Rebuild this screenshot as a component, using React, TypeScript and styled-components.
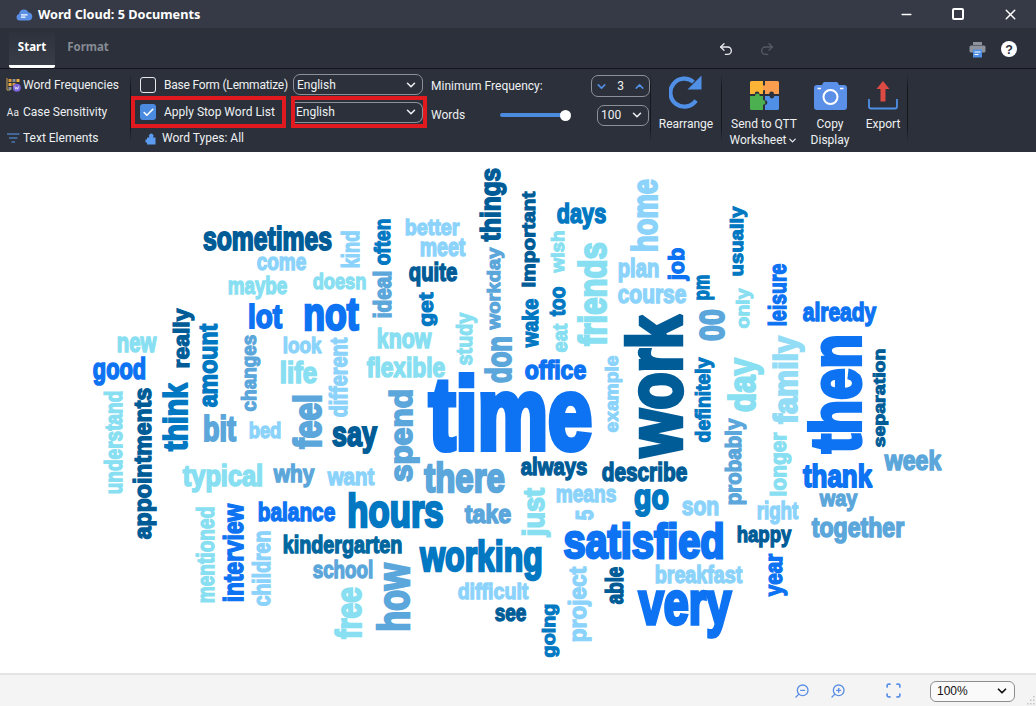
import React from "react";
import styled, { createGlobalStyle } from "styled-components";
import { ChevronDown, ChevronUp, Undo2, Redo2, ZoomIn, ZoomOut, Scan, Minus, X, Check } from "lucide-react";

const GlobalStyle = createGlobalStyle`
  html, body { margin: 0; padding: 0; height: 100%; overflow: hidden; }
  #root { height: 100%; }
  body { font-family: "Noto Sans", "Open Sans", sans-serif; }
`;

const Page = styled.div`
  width: 1036px; height: 706px; display: flex; flex-direction: column; background: #2b303a; color: #eef0f3;
`;
const TitleBar = styled.header`
  height: 28px; background: #353a46; display: flex; align-items: center; padding-left: 16px; flex: none;
`;
const AppTitle = styled.h1`
  margin: 0 0 0 5px; font-size: 12.7px; font-weight: 700; color: #fff; flex: 1;
`;
const WinButton = styled.div`
  width: 52px; height: 28px; display: flex; align-items: center; justify-content: center; color: #fff;
`;
const WinButtons = styled.div`display: flex;`;
const MaxBox = styled.div`width: 8px; height: 8px; border: 2px solid #fff; border-radius: 2px;`;

const TabRow = styled.nav`
  height: 40px; flex: none; display: flex; align-items: stretch; background: #2b303a; border-bottom: 1px solid #14161b; padding-left: 9px;
`;
const Tab = styled.div<{ $active?: boolean }>`
  width: ${p => (p.$active ? 46 : 66)}px; display: flex; align-items: center; justify-content: center;
  margin-top: 4px; padding-bottom: 4px; font-size: 11.5px; font-weight: 700;
  color: ${p => (p.$active ? "#fff" : "#868b94")};
  border-bottom: ${p => (p.$active ? "3px solid #fff" : "3px solid transparent")};
  border-radius: 0 0 2px 2px;
  background: ${p => (p.$active ? "linear-gradient(#2d323c, #383d48)" : "none")};
`;
const TabSpacer = styled.div`flex: 1;`;
const QuickIcons = styled.div`display: flex; align-items: center; height: 40px; margin-top: 1px;`;
const QuickSlot = styled.div<{ $w: number }>`
  width: ${p => p.$w}px; display: flex; justify-content: center; align-items: center; flex: none;
`;

const Ribbon = styled.section`
  height: 83px; flex: none; display: flex; background: #2b303a; font-family: Roboto, "Noto Sans", sans-serif; font-size: 12px; color: #eef0f3;
`;
const Sep = styled.div`
  width: 1px; flex: none; margin: 5px 0 10px;
  background: linear-gradient(transparent, #14171c 20%, #14171c 80%, transparent);
`;
const RowsGroup = styled.div`
  display: grid; grid-template-rows: 23px 32px 20px; padding-top: 4px; width: 130px; flex: none;
`;
const SideRow = styled.div`display: flex; align-items: center; white-space: nowrap;`;
const SideIcon = styled.span`width: 23px; flex: none; display: flex; justify-content: center; padding-left: 3px; box-sizing: border-box;`;
const AaIcon = styled.span`font-size: 10px; letter-spacing: .3px; color: #e6e8ec;`;

const StopGroup = styled.div`
  display: grid; grid-template-columns: 160px 136px; grid-template-rows: 23px 32px 20px; padding-top: 4px; flex: none;
`;
const CheckRow = styled.div`display: flex; align-items: center; gap: 8px; padding-left: 9px; white-space: nowrap;`;
const TightLabel = styled.span`letter-spacing: -0.2px;`;
const Highlight = styled.div<{ $mr?: number }>`
  border: 4px solid #e01a1f; display: flex; align-items: center; box-sizing: border-box;
  margin-right: ${p => p.$mr ?? 0}px;
`;
const HighlightCheck = styled(CheckRow)`padding-left: 5px; flex: 1;`;
const Box = styled.span<{ $on?: boolean }>`
  width: 16px; height: 16px; flex: none; border-radius: 3px; box-sizing: border-box; display: flex; align-items: center; justify-content: center;
  border: ${p => (p.$on ? "none" : "1.5px solid #e6e8ec")};
  background: ${p => (p.$on ? "#4a8be0" : "transparent")};
`;
const SelectBox = styled.div<{ $w?: number; $ml?: number }>`
  height: 21px; box-sizing: border-box; border: 1px solid #8b9099; border-radius: 7px;
  display: flex; align-items: center; justify-content: space-between; padding: 0 4px 0 3px;
  width: ${p => (p.$w ? `${p.$w}px` : "100%")}; margin-left: ${p => p.$ml ?? 0}px; align-self: center; flex: none;
`;
const FlushSelect = styled(SelectBox)`border-left: none; border-radius: 0 7px 7px 0; padding-left: 1px;`;
const TypesRow = styled.div`display: flex; align-items: center; gap: 5px; padding-left: 14px; grid-column: 1 / 3; white-space: nowrap;`;

const FreqGroup = styled.div`
  width: 223px; box-sizing: border-box; padding: 6px 0 0 4px; flex: none; display: flex; flex-direction: column; gap: 7px;
`;
const FreqRow = styled.div`height: 22px; display: flex; align-items: center; justify-content: space-between;`;
const Stepper = styled.div`
  width: 59px; height: 22px; box-sizing: border-box; border: 1px solid #8b9099; border-radius: 7px;
  display: flex; align-items: center; justify-content: space-between; padding: 0 3px;
`;
const Slider = styled.div`
  width: 66px; height: 4px; border-radius: 2px; background: #4a8be0; position: relative; margin-left: 35px; margin-right: 31px; flex: none;
`;
const Thumb = styled.div`
  position: absolute; right: -5px; top: -3.5px; width: 11px; height: 11px; border-radius: 50%; background: #fff;
`;
const WordsLabel = styled.span`width: 34px; flex: none;`;
const SliderRow = styled(FreqRow)`justify-content: flex-start;`;

const ToolGroup = styled.div<{ $w: number; $pl?: number }>`
  width: ${p => p.$w}px; box-sizing: border-box; padding-left: ${p => p.$pl ?? 0}px; flex: none; display: flex;
`;
const Tool = styled.div<{ $w: number }>`
  width: ${p => p.$w}px; display: flex; flex-direction: column; align-items: center; text-align: center; line-height: 16px; white-space: nowrap;
`;
const ToolIcon = styled.div`height: 47px; display: flex; align-items: flex-end; justify-content: center; padding-bottom: 6px; box-sizing: border-box;`;
const DropLine = styled.span`display: inline-flex; align-items: center; gap: 1px;`;

const Canvas = styled.main`flex: 1; background: #fff; min-height: 0;`;
const CloudSvg = styled.svg`display: block; width: 1036px; height: 521px;`;
const WordText = styled.text`
  font-family: "Liberation Sans", Arial, sans-serif; font-weight: 700; stroke-linejoin: miter; stroke-miterlimit: 2;
`;

const StatusBar = styled.footer`
  height: 33px; flex: none; box-sizing: border-box; background: #f4f4f4; border-top: 2px solid #e4e4e4;
  display: flex; align-items: center; position: relative; color: #5b8fe6;
`;
const StatusSlot = styled.div<{ $w: number }>`width: ${p => p.$w}px; display: flex; justify-content: center; flex: none;`;
const ZoomSelect = styled.div`
  width: 85px; height: 21px; box-sizing: border-box; border: 1px solid #8e8e8e; border-radius: 6px; background: #fafafa; color: #111;
  display: flex; align-items: center; justify-content: space-between; padding: 0 5px 0 6px; font-size: 12px; margin-top: 1px;
  font-family: "Liberation Sans", sans-serif;
`;
const Grip = styled.svg`position: absolute; right: 1px; bottom: 1px;`;

const D = "#005c97", M = "#0278c2", B = "#0d73f2", S = "#5ba6da", L = "#8bd3fb", C = "#88dff1";

type Placed = { t: string; x: number; y: number; len: number; xh: number; c: string; v: boolean };
const H = (t: string, x0: number, x1: number, base: number, xh: number, c: string): Placed =>
  ({ t, x: x0, y: base, len: x1 - x0, xh, c, v: false });
const V = (t: string, bottom: number, top: number, x0: number, x1: number, c: string): Placed => {
  const asc = /[bdfhkltij0-9]/.test(t), desc = /[gjpqy]/.test(t);
  const xh = (x1 - x0) / (1 + (asc ? 0.33 : 0) + (desc ? 0.28 : 0));
  return { t, x: x1 - (desc ? 0.28 * xh : 0), y: bottom, len: bottom - top, xh, c, v: true };
};

const WORDS: Placed[] = [
  H("sometimes", 202, 333, 251, 19, D), H("come", 256, 307, 271, 14, L), V("kind", 269, 230, 342, 360, L),
  V("often", 266, 218, 374, 391, M), V("ideal", 319, 270, 373, 392, S), H("better", 404, 460, 236, 13, L),
  H("meet", 419, 466, 257, 15, L), V("things", 242, 167, 479, 505, D), V("workday", 330, 247, 486, 504, S),
  H("quite", 408, 458, 282, 15, D), H("doesn", 312, 367, 290, 13, C), H("maybe", 227, 288, 295, 14, C),
  H("lot", 247, 283, 329, 20, B), H("not", 302, 360, 331, 27, B), V("get", 327, 292, 418, 437, M),
  H("know", 376, 432, 349, 16, C), V("study", 366, 312, 456, 476, C), H("flexible", 366, 446, 378, 16, C),
  V("don", 384, 335, 485, 512, S), H("new", 116, 157, 353, 16, C), V("really", 369, 308, 173, 193, D),
  V("amount", 408, 323, 198, 218, M), V("changes", 412, 334, 241, 260, S), H("look", 282, 322, 354, 13, L),
  H("life", 279, 318, 384, 17, C), V("different", 418, 337, 330, 348, L), H("good", 92, 147, 380, 17, B),
  V("understand", 495, 390, 104, 123, C), V("appointments", 540, 387, 133, 156, D), V("think", 452, 382, 162, 188, M),
  H("bit", 202, 237, 442, 21, S), H("bed", 248, 282, 439, 13, L), V("feel", 450, 393, 292, 322, S),
  H("say", 331, 378, 447, 21, D), V("spend", 483, 388, 388, 418, S), H("typical", 182, 264, 487, 17, C),
  H("why", 273, 315, 483, 14, S), H("want", 327, 375, 486, 14, L), H("there", 423, 506, 493, 24, S),
  V("mentioned", 604, 506, 197, 215, C), V("interview", 603, 503, 223, 244, B), V("children", 607, 530, 253, 271, L),
  H("balance", 257, 336, 522, 15, B), H("hours", 346, 445, 528, 27, M), H("take", 464, 512, 524, 15, S),
  H("kindergarten", 282, 403, 554, 14, "#01679f"), H("working", 419, 544, 572, 25, M), H("school", 312, 374, 579, 14, S),
  V("how", 633, 562, 376, 410, S), V("free", 640, 586, 335, 362, C), H("difficult", 457, 529, 600, 13, L),
  H("see", 494, 527, 622, 14, D), H("time", 426, 595, 452, 60, B),
  V("important", 288, 191, 521, 539, D), H("days", 556, 607, 224, 16, M), V("wish", 273, 230, 550, 565, C),
  V("wake", 348, 298, 522, 539, M), V("too", 317, 286, 549, 566, M), V("eat", 353, 323, 552, 568, C),
  V("friends", 347, 241, 577, 607, C), V("home", 253, 178, 631, 658, L), H("plan", 617, 660, 278, 15, L),
  V("job", 281, 247, 667, 688, B), H("course", 617, 687, 304, 15, L), V("pm", 301, 274, 697, 713, M),
  V("usually", 277, 206, 729, 747, M), V("only", 329, 288, 735, 753, C), V("00", 342, 308, 697, 725, S),
  V("leisure", 327, 263, 768, 787, B), H("already", 802, 877, 322, 15, B), H("office", 524, 587, 380, 15, B),
  V("example", 433, 355, 604, 622, L), V("work", 459, 313, 624, 683, D), V("definitely", 443, 357, 695, 714, M),
  V("day", 413, 357, 727, 762, C), V("family", 425, 335, 772, 803, "#93dcf5"), V("then", 455, 332, 807, 862, B),
  V("separation", 448, 348, 872, 888, D), V("probably", 506, 418, 724, 745, S), V("longer", 497, 432, 770, 790, C),
  H("always", 520, 588, 476, 14, D), H("describe", 601, 688, 482, 15, D), H("thank", 802, 873, 488, 18, B),
  H("week", 884, 942, 471, 16, S), V("just", 537, 487, 522, 550, C), H("means", 555, 617, 503, 14, L),
  H("go", 633, 670, 510, 21, M), H("son", 681, 720, 516, 15, L), H("right", 756, 799, 520, 14, L),
  H("way", 819, 858, 507, 13, S), H("together", 811, 905, 538, 16, S), V("5", 521, 509, 575, 594, L),
  H("satisfied", 562, 726, 559, 28, B), H("happy", 736, 792, 543, 13, D), V("year", 597, 553, 769, 787, B),
  H("breakfast", 654, 743, 584, 14, L), H("very", 637, 733, 626, 36, B), V("project", 643, 566, 568, 591, L),
  V("able", 605, 566, 606, 624, D), V("going", 658, 603, 541, 559, M),
];

const Cloud = () => (
  <CloudSvg viewBox="0 152 1036 521">
    {WORDS.map(w => {
      const sw = w.xh * 0.1;
      const fs = (w.xh - sw) / 0.528;
      const tr = w.v
        ? `translate(${w.x - sw / 2} ${w.y - sw / 2}) rotate(-90)`
        : `translate(${w.x + sw / 2} ${w.y - sw / 2})`;
      return (
        <WordText key={w.t} transform={tr} fontSize={fs} fill={w.c} stroke={w.c} strokeWidth={sw}
          textLength={w.len - sw} lengthAdjust="spacingAndGlyphs">{w.t}</WordText>
      );
    })}
  </CloudSvg>
);

const CloudLogo = () => (
  <svg width="17" height="13" viewBox="0 0 17 13">
    <path d="M3.6 12.5a3.3 3.3 0 0 1-.5-6.5A5 5 0 0 1 12.6 4.4 4.1 4.1 0 0 1 13 12.5z" fill="#5b8fe6" />
    <path d="M5 6.8h6.5M5 9.2h4.5" stroke="#fff" strokeWidth="1.2" />
  </svg>
);
const FreqIcon = () => (
  <svg width="15" height="15" viewBox="0 0 15 15">
    <path d="M1 1v12h3" stroke="#c9a25a" fill="none" />
    <rect x="2.5" y="2" width="3" height="3" fill="#d9973a" /><rect x="6.5" y="2" width="3" height="3" fill="#8a8f98" />
    <rect x="10.5" y="2" width="3" height="3" fill="#f0b040" /><rect x="2.5" y="6" width="3" height="3" fill="#f0b040" />
    <rect x="6.5" y="6" width="3" height="3" fill="#d9973a" /><rect x="2.5" y="10" width="3" height="3" fill="#8a8f98" />
    <circle cx="10.8" cy="10.8" r="4" fill="#7a62d8" />
    <path d="M8.9 9.3l1 3 .9-2 .9 2 1-3" stroke="#fff" strokeWidth=".7" fill="none" />
  </svg>
);
const FilterIcon = () => (
  <svg width="13" height="10" viewBox="0 0 13 10">
    <path d="M0 1h12.5M2 5h8.5M4.5 9h3.5" stroke="#5b9bf0" strokeWidth="1.2" />
  </svg>
);
const PieceIcon = () => (
  <svg width="12" height="13" viewBox="0 0 12 13">
    <path d="M2 12.5V5.500H4.500a2.300 2.300 0 1 1 3.500 0h2.500V12.500z" fill="#5b9bf0" />
    <path d="M0.500 7.500h2v3h-2z" fill="#5b9bf0" />
  </svg>
);
const RearrangeIcon = () => (
  <svg width="34" height="36" viewBox="0 0 34 36">
    <path d="M27 26.5A14 14 0 1 1 24.5 8" fill="none" stroke="#4f8fe6" strokeWidth="4.2" strokeLinecap="butt" />
    <path d="M32.5 1.5V15.5H18.5z" fill="#4f8fe6" />
  </svg>
);
const PuzzleIcon = () => (
  <svg width="29" height="29" viewBox="0 0 29 29">
    <path d="M1.5 0H13v4.5a2.4 2.4 0 0 1 0 5V13H9.5a2.4 2.4 0 0 0-4.800 0H0V1.500A1.500 1.500 0 0 1 1.500 0z" fill="#fbb436" />
    <path d="M15 0H27.500A1.500 1.500 0 0 1 29 1.500V13H24a2.400 2.400 0 0 0-4.800 0H15V9a2.400 2.400 0 0 1 0-4.800z" fill="#f99d4f" />
    <path d="M0 15H5a2.400 2.400 0 0 1 4.800 0H13v4a2.400 2.400 0 0 1 0 4.800V29H1.500A1.500 1.500 0 0 1 0 27.500z" fill="#4caf50" />
    <path d="M15 15h4.500a2.400 2.400 0 0 0 4.800 0H29V27.500A1.500 1.500 0 0 1 27.500 29H15V24a2.400 2.400 0 0 0 0-4.800z" fill="#4f8fe6" />
  </svg>
);
const CameraIcon = () => (
  <svg width="33" height="28" viewBox="0 0 33 28">
    <path d="M3 3h5l1-2a2 2 0 0 1 1.500-1h12A2 2 0 0 1 24 1l1 2h5a3 3 0 0 1 3 3v19a3 3 0 0 1-3 3H3a3 3 0 0 1-3-3V6a3 3 0 0 1 3-3z" fill="#5b90e8" />
    <circle cx="16.500" cy="15" r="7" fill="none" stroke="#fff" strokeWidth="2" />
    <path d="M3.500 6.500h3.500M26 6.500h3.500" stroke="#fff" strokeWidth="1.500" />
  </svg>
);
const ExportIcon = () => (
  <svg width="30" height="29" viewBox="0 0 30 29">
    <path d="M15 0l6.500 8h-4v12.500h-5V8h-4z" fill="#dc4a44" />
    <path d="M1 18v7.500A2 2 0 0 0 3 27.500h24a2 2 0 0 0 2-2V18" fill="none" stroke="#4f8fe6" strokeWidth="1.800" />
  </svg>
);
const PrinterIcon = () => (
  <svg width="17" height="17" viewBox="0 0 17 17">
    <path d="M4 1h9v3H4z" fill="#8d929b" /><rect x="0.500" y="4.500" width="16" height="7" rx="1.500" fill="#8d929b" />
    <rect x="4" y="8.500" width="9" height="8" fill="#4f8fe6" />
    <path d="M5.500 11h6M5.500 13.500h4" stroke="#fff" strokeWidth="1" />
  </svg>
);
const HelpIcon = () => (
  <svg width="16" height="16" viewBox="0 0 16 16">
    <circle cx="8" cy="8" r="8" fill="#fff" />
    <text x="8" y="12.500" textAnchor="middle" fontSize="12.500" fontWeight="700" fontFamily="Liberation Sans" fill="#2b303a">?</text>
  </svg>
);

export default function App() {
  return (
    <Page>
      <GlobalStyle />
      <TitleBar>
        <CloudLogo />
        <AppTitle>Word Cloud: 5 Documents</AppTitle>
        <WinButtons>
          <WinButton><Minus size={15} strokeWidth={2.2} /></WinButton>
          <WinButton><MaxBox /></WinButton>
          <WinButton><X size={17} strokeWidth={2} /></WinButton>
        </WinButtons>
      </TitleBar>
      <TabRow>
        <Tab $active>Start</Tab>
        <Tab>Format</Tab>
        <TabSpacer />
        <QuickIcons>
          <QuickSlot $w={41}><Undo2 size={16} color="#e8eaee" /></QuickSlot>
          <QuickSlot $w={41}><Redo2 size={16} color="#555a64" /></QuickSlot>
          <QuickSlot $w={174} />
          <QuickSlot $w={32}><PrinterIcon /></QuickSlot>
          <QuickSlot $w={32}><HelpIcon /></QuickSlot>
          <QuickSlot $w={11} />
        </QuickIcons>
      </TabRow>
      <Ribbon>
        <RowsGroup>
          <SideRow><SideIcon><FreqIcon /></SideIcon>Word Frequencies</SideRow>
          <SideRow><SideIcon><AaIcon>Aa</AaIcon></SideIcon>Case Sensitivity</SideRow>
          <SideRow><SideIcon><FilterIcon /></SideIcon>Text Elements</SideRow>
        </RowsGroup>
        <Sep />
        <StopGroup>
          <CheckRow><Box /><TightLabel>Base Form (Lemmatize)</TightLabel></CheckRow>
          <SelectBox $w={130} $ml={2}>English<ChevronDown size={14} strokeWidth={2.6} /></SelectBox>
          <Highlight $mr={5}><HighlightCheck><Box $on><Check size={13} strokeWidth={3} color="#fff" /></Box>Apply Stop Word List</HighlightCheck></Highlight>
          <Highlight><FlushSelect>English<ChevronDown size={14} strokeWidth={2.6} /></FlushSelect></Highlight>
          <TypesRow><PieceIcon />Word Types: All</TypesRow>
        </StopGroup>
        <FreqGroup>
          <FreqRow>
            Minimum Frequency:
            <Stepper>
              <ChevronDown size={13} strokeWidth={3} color="#4f8fe6" />3<ChevronUp size={13} strokeWidth={3} color="#4f8fe6" />
            </Stepper>
          </FreqRow>
          <SliderRow>
            <WordsLabel>Words</WordsLabel>
            <Slider><Thumb /></Slider>
            <SelectBox $w={52}>100<ChevronDown size={14} strokeWidth={2.6} /></SelectBox>
          </SliderRow>
        </FreqGroup>
        <Sep />
        <ToolGroup $w={70}>
          <Tool $w={70}><ToolIcon><RearrangeIcon /></ToolIcon>Rearrange</Tool>
        </ToolGroup>
        <Sep />
        <ToolGroup $w={185} $pl={9}>
          <Tool $w={66}><ToolIcon><PuzzleIcon /></ToolIcon>Send to QTT<DropLine>Worksheet<ChevronDown size={11} strokeWidth={2.6} /></DropLine></Tool>
          <Tool $w={66}><ToolIcon><CameraIcon /></ToolIcon>Copy<br />Display</Tool>
          <Tool $w={40}><ToolIcon><ExportIcon /></ToolIcon>Export</Tool>
        </ToolGroup>
        <Sep />
      </Ribbon>
      <Canvas><Cloud /></Canvas>
      <StatusBar>
        <StatusSlot $w={784} />
        <StatusSlot $w={36}><ZoomOut size={16} style={{ transform: "scaleX(-1)" }} /></StatusSlot>
        <StatusSlot $w={36}><ZoomIn size={16} style={{ transform: "scaleX(-1)" }} /></StatusSlot>
        <StatusSlot $w={74}><Scan size={17} strokeWidth={2.4} /></StatusSlot>
        <ZoomSelect>100%<ChevronDown size={14} strokeWidth={3} color="#111" /></ZoomSelect>
        <Grip width="10" height="10" viewBox="0 0 10 10">
          <path d="M8 1h1.500v1.500H8zM5 4.500h1.500V6H5zM8 4.500h1.500V6H8zM2 8h1.500v1.500H2zM5 8h1.500v1.500H5zM8 8h1.500v1.500H8z" fill="#c4c4c4" />
        </Grip>
      </StatusBar>
    </Page>
  );
}
